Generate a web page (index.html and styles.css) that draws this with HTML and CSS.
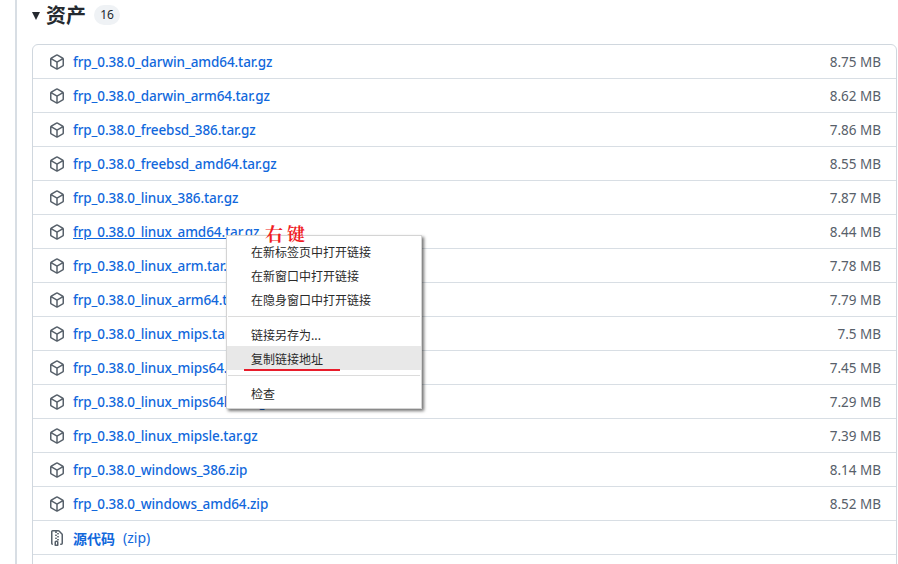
FILE: index.html
```html
<!DOCTYPE html>
<html lang="zh">
<head>
<meta charset="utf-8">
<title>资产</title>
<link rel="stylesheet" href="styles.css">
</head>
<body>
<svg class="defs" width="0" height="0" aria-hidden="true">
  <symbol id="pkg" viewBox="0 0 16 16"><path d="m8.878.392 5.25 3.045c.54.314.872.89.872 1.514v6.098a1.75 1.75 0 0 1-.872 1.514l-5.25 3.045a1.75 1.75 0 0 1-1.756 0l-5.25-3.045A1.75 1.75 0 0 1 1 11.049V4.951c0-.624.332-1.201.872-1.514L7.122.392a1.75 1.75 0 0 1 1.756 0ZM7.875 1.69l-4.63 2.685L8 7.133l4.755-2.758-4.63-2.685a.248.248 0 0 0-.25 0ZM2.5 5.677v5.372c0 .09.047.171.125.216l4.625 2.683V8.432Zm6.25 8.271 4.625-2.683a.25.25 0 0 0 .125-.216V5.677L8.75 8.432Z"/></symbol>
  <symbol id="zip" viewBox="0 0 16 16"><path d="M3.5 1.75v11.5c0 .09.048.173.126.217a.75.75 0 0 1-.752 1.298A1.748 1.748 0 0 1 2 13.25V1.75C2 .784 2.784 0 3.75 0h5.586c.464 0 .909.185 1.237.513l2.914 2.914c.329.328.513.773.513 1.237v8.586A1.75 1.75 0 0 1 12.25 15h-.5a.75.75 0 0 1 0-1.5h.5a.25.25 0 0 0 .25-.25V4.664a.25.25 0 0 0-.073-.177L9.513 1.573a.25.25 0 0 0-.177-.073H7.25a.75.75 0 0 1 0 1.5h-.5a.75.75 0 0 1 0-1.5h-3a.25.25 0 0 0-.25.25Zm3.75 8.75h.5c.966 0 1.75.784 1.75 1.75v3a.75.75 0 0 1-.75.75h-2.5a.75.75 0 0 1-.75-.75v-3c0-.966.784-1.75 1.75-1.75ZM6 5.25a.75.75 0 0 1 .75-.75h.5a.75.75 0 0 1 0 1.5h-.5A.75.75 0 0 1 6 5.25Zm.75 2.25h.5a.75.75 0 0 1 0 1.5h-.5a.75.75 0 0 1 0-1.5ZM8 6.75A.75.75 0 0 1 8.75 6h.5a.75.75 0 0 1 0 1.5h-.5A.75.75 0 0 1 8 6.75ZM8.75 3h.5a.75.75 0 0 1 0 1.5h-.5a.75.75 0 0 1 0-1.5ZM8 9.75A.75.75 0 0 1 8.75 9h.5a.75.75 0 0 1 0 1.5h-.5A.75.75 0 0 1 8 9.75Zm-1 2.5v2.25h1v-2.25a.25.25 0 0 0-.25-.25h-.5a.25.25 0 0 0-.25.25Z"/></symbol>
</svg>
<main class="timeline">
  <header class="assets-head">
    <span class="caret"></span>
    <h2 class="assets-title">资产</h2>
    <span class="counter">16</span>
  </header>
  <ul class="assets">
    <li class="row"><svg class="icon"><use href="#pkg"/></svg><a class="file">frp_0.38.0_darwin_amd64.tar.gz</a><span class="size">8.75 MB</span></li>
    <li class="row"><svg class="icon"><use href="#pkg"/></svg><a class="file">frp_0.38.0_darwin_arm64.tar.gz</a><span class="size">8.62 MB</span></li>
    <li class="row"><svg class="icon"><use href="#pkg"/></svg><a class="file">frp_0.38.0_freebsd_386.tar.gz</a><span class="size">7.86 MB</span></li>
    <li class="row"><svg class="icon"><use href="#pkg"/></svg><a class="file">frp_0.38.0_freebsd_amd64.tar.gz</a><span class="size">8.55 MB</span></li>
    <li class="row"><svg class="icon"><use href="#pkg"/></svg><a class="file">frp_0.38.0_linux_386.tar.gz</a><span class="size">7.87 MB</span></li>
    <li class="row"><svg class="icon"><use href="#pkg"/></svg><a class="file hovered">frp_0.38.0_linux_amd64.tar.gz</a><span class="size">8.44 MB</span></li>
    <li class="row"><svg class="icon"><use href="#pkg"/></svg><a class="file">frp_0.38.0_linux_arm.tar.gz</a><span class="size">7.78 MB</span></li>
    <li class="row"><svg class="icon"><use href="#pkg"/></svg><a class="file">frp_0.38.0_linux_arm64.tar.gz</a><span class="size">7.79 MB</span></li>
    <li class="row"><svg class="icon"><use href="#pkg"/></svg><a class="file">frp_0.38.0_linux_mips.tar.gz</a><span class="size">7.5 MB</span></li>
    <li class="row"><svg class="icon"><use href="#pkg"/></svg><a class="file">frp_0.38.0_linux_mips64.tar.gz</a><span class="size">7.45 MB</span></li>
    <li class="row"><svg class="icon"><use href="#pkg"/></svg><a class="file">frp_0.38.0_linux_mips64le.tar.gz</a><span class="size">7.29 MB</span></li>
    <li class="row"><svg class="icon"><use href="#pkg"/></svg><a class="file">frp_0.38.0_linux_mipsle.tar.gz</a><span class="size">7.39 MB</span></li>
    <li class="row"><svg class="icon"><use href="#pkg"/></svg><a class="file">frp_0.38.0_windows_386.zip</a><span class="size">8.14 MB</span></li>
    <li class="row"><svg class="icon"><use href="#pkg"/></svg><a class="file">frp_0.38.0_windows_amd64.zip</a><span class="size">8.52 MB</span></li>
    <li class="row"><svg class="icon"><use href="#zip"/></svg><a class="file source">源代码</a><span class="ext">(zip)</span></li>
    <li class="row"></li>
  </ul>
</main>
<nav class="menu">
  <div class="item">在新标签页中打开链接</div>
  <div class="item">在新窗口中打开链接</div>
  <div class="item">在隐身窗口中打开链接</div>
  <div class="sep"></div>
  <div class="item">链接另存为...</div>
  <div class="item active">复制链接地址</div>
  <div class="sep"></div>
  <div class="item">检查</div>
</nav>
<div class="note">右键</div>
<div class="underline"></div>
</body>
</html>
```
FILE: styles.css
```css
* { box-sizing: border-box; }
html, body { margin: 0; height: 564px; overflow: hidden; background: #fff; }
body { font-family: "Noto Sans", "Noto Sans CJK SC", sans-serif; color: #24292f; position: relative; }
.defs { position: absolute; }
.timeline { margin-left: 15px; border-left: 2px solid #d8dee4; padding: 0 1px 0 15px; height: 564px; }
.assets-head { display: flex; align-items: center; height: 44px; padding-bottom: 14px; }
.caret { width: 0; height: 0; border-left: 4.5px solid transparent; border-right: 4.5px solid transparent; border-top: 8px solid #24292f; margin: 2px 5px 0 0; }
.assets-title { margin: 0 0 0 1px; font-size: 20px; line-height: 30px; font-weight: 700; font-family: "Noto Sans CJK SC", sans-serif; }
.counter { margin-left: 8px; width: 26px; height: 20px; border-radius: 10px; background: #eff2f5; font-size: 12px; line-height: 20px; text-align: center; }
.assets { list-style: none; margin: 0; padding: 0; border: 1px solid #d0d7de; border-radius: 6px; }
.row { display: flex; align-items: center; height: 34px; padding: 0 15px 0 16px; border-bottom: 1px solid #d8dee4; font-size: 13.5px; }
.icon { width: 16px; height: 16px; fill: #57606a; margin-right: 8px; flex: none; }
.file { color: #1168dc; font-weight: 500; white-space: nowrap; letter-spacing: -0.1px; }
.hovered { text-decoration: underline; }
.source { font-size: 14px; font-weight: 700; font-family: "Noto Sans CJK SC", sans-serif; letter-spacing: 0; }
.ext { color: #1168dc; margin-left: 8px; font-size: 14px; }
.size { margin-left: auto; color: #57606a; }
.note { position: absolute; left: 265px; top: 221px; font-family: "Noto Serif CJK SC", serif; font-weight: 700; font-size: 18px; line-height: 24px; letter-spacing: 4px; color: #f01c24; }
.menu { position: absolute; left: 226px; top: 235px; width: 196px; height: 174px; background: #fff; border: 1px solid #d4d4d4; box-shadow: 2px 2px 3px rgba(0,0,0,.55); padding-top: 3px; font-family: "Noto Sans CJK SC", sans-serif; font-size: 12px; color: #2a2a2a; }
.item { height: 24px; line-height: 25px; padding-left: 24px; }
.active { background: #e8e8e8; }
.sep { height: 1px; background: #dcdcdc; margin: 5px 1px 5px 1px; }
.underline { position: absolute; left: 244px; top: 369px; width: 96px; height: 2px; background: #e81c2b; }
```
